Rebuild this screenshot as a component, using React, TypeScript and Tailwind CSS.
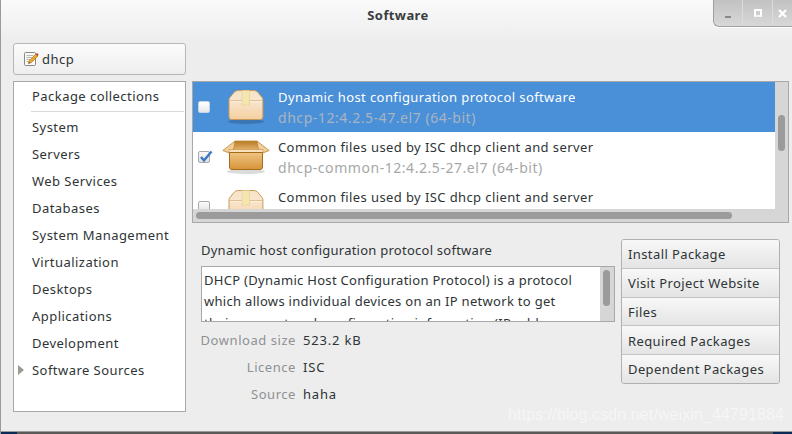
import React from 'react';

const font = { fontFamily: '"Noto Sans", sans-serif' };

const collections = [
  'System',
  'Servers',
  'Web Services',
  'Databases',
  'System Management',
  'Virtualization',
  'Desktops',
  'Applications',
  'Development',
  'Software Sources',
];

const actions = ['Install Package', 'Visit Project Website', 'Files', 'Required Packages', 'Dependent Packages'];

const ClosedBox = ({ id }: { id: string }) => (
  <svg width="48" height="36" viewBox="0 0 48 36" className="shrink-0">
    <defs>
      <linearGradient id={id} x1="0" y1="0" x2="0" y2="1">
        <stop offset="0" stopColor="#f8e2c6" />
        <stop offset="0.35" stopColor="#f9e6cf" />
        <stop offset="1" stopColor="#f4cf9e" />
      </linearGradient>
    </defs>
    <ellipse cx="24" cy="32.500" rx="18" ry="2.500" fill="#000" opacity="0.18" />
    <path d="M12 3.500C13 2 15 1.500 17 1.500h14c2 0 4 .5 5 2l4 5c.6.8.9 1.500.9 2.500V28a2.500 2.500 0 0 1-2.500 2.500H9.500A2.500 2.500 0 0 1 7 28V11c0-1 .3-1.700.9-2.500z" fill={`url(#${id})`} stroke="#c9995a" />
    <path d="M8 11.500h32" stroke="#dcb584" strokeWidth="0.800" />
    <path d="M8 12.500h32" stroke="#fff3e2" strokeWidth="0.800" />
    <path d="M20 1.500h7.500v15l-2-1-1.700 1-1.800-1-2 1z" fill="#f3e6ae" stroke="#dcc98c" strokeWidth="0.500" />
  </svg>
);

const OpenBox = () => (
  <svg width="48" height="36" viewBox="0 0 48 36" className="shrink-0">
    <defs>
      <linearGradient id="boxBody" x1="0" y1="0" x2="0" y2="1">
        <stop offset="0" stopColor="#efc483" />
        <stop offset="1" stopColor="#d6943a" />
      </linearGradient>
      <linearGradient id="boxInner" x1="0" y1="0" x2="0" y2="1">
        <stop offset="0" stopColor="#b47a22" />
        <stop offset="1" stopColor="#e3b36d" />
      </linearGradient>
    </defs>
    <ellipse cx="24" cy="32.500" rx="19" ry="2.500" fill="#000" opacity="0.14" />
    <path d="M13 2h22l5 9H8z" fill="url(#boxInner)" stroke="#c38c3a" strokeWidth="0.800" />
    <path d="M13 2 .8 11.500l6.500 2.500L12 9zM35 2l12.200 9.500-6.500 2.500L36 9z" fill="#f0cf9b" stroke="#bd8433" strokeWidth="0.800" />
    <path d="M7 10.500h34v3H7z" fill="#f7e0bb" stroke="#c79345" strokeWidth="0.600" />
    <path d="M7.500 13.500h33V28a2.500 2.500 0 0 1-2.500 2.500H10A2.500 2.500 0 0 1 7.500 28z" fill="url(#boxBody)" stroke="#a66d18" />
  </svg>
);

const NoteIcon = () => (
  <svg width="16" height="16" viewBox="0 0 16 16" className="shrink-0">
    <rect x="1.500" y="1.500" width="11" height="13" rx="1" fill="#f8f8f4" stroke="#8a8a84" />
    <path d="M3.500 4.500h7M3.500 6.500h6M3.500 8.500h4M3.500 10.500h3" stroke="#a8a8a4" strokeWidth="0.800" />
    <path d="m5.500 12.500 1-3 6.500-6.500 2 2-6.500 6.500z" fill="#eda82c" stroke="#a8680e" strokeWidth="0.600" />
    <path d="m13 3 1-1 1.500 1.500-1 1.500z" fill="#c8281e" />
    <path d="m5.500 12.500.4-1.500 1.100 1.100z" fill="#333" />
  </svg>
);

const Check = ({ checked = false, white = false }: { checked?: boolean; white?: boolean }) => (
  <div className={`relative w-[12px] h-[12px] shrink-0 rounded-[2px] border ${white ? 'bg-gradient-to-b from-white to-[#e4e8ea] border-[#c4d4e6]' : 'bg-gradient-to-b from-[#fafafa] to-[#e2e2e2] border-[#a8a8a8]'}`}>
    {checked && (
      <svg width="14" height="13" viewBox="0 0 14 13" className="absolute left-[0px] top-[-2px]">
        <path d="M2 7 5 10.500 12.500 1.500" fill="none" stroke="#3b78c4" strokeWidth="2.400" />
      </svg>
    )}
  </div>
);

const PackageRow = ({
  id,
  title,
  sub,
  selected = false,
  checked = false,
  open = false,
}: {
  id: string;
  title: string;
  sub: string;
  selected?: boolean;
  checked?: boolean;
  open?: boolean;
}) => (
  <div className={`h-[50px] shrink-0 flex items-center pl-[5px] ${selected ? 'bg-[#4a90d9]' : 'bg-white'}`}>
    <div className="w-[12px] flex items-center">
      <Check checked={checked} white={selected} />
    </div>
    <div className="w-[68px] flex justify-center pl-[3px]">{open ? <OpenBox /> : <ClosedBox id={id} />}</div>
    <div className="flex flex-col gap-[3px] pt-[1px]">
      <div className={`text-[13px] leading-[18px] tracking-[0.4px] whitespace-nowrap ${selected ? 'text-white' : 'text-[#2e3436]'}`}>{title}</div>
      <div className={`text-[14px] leading-[18px] tracking-[0.55px] whitespace-nowrap ${selected ? 'text-[#a9b4bf]' : 'text-[#a6a8a8]'}`}>{sub}</div>
    </div>
  </div>
);

const Field = ({ label, value }: { label: string; value: string }) => (
  <div className="h-[27px] flex items-center">
    <div className="w-[104px] text-right text-[13px] tracking-[0.55px] text-[#8f9192]">{label}</div>
    <div className="pl-[7px] text-[13px] tracking-[0.8px] text-[#2e3436]">{value}</div>
  </div>
);

export default function App() {
  return (
    <div style={font} className="relative w-[792px] h-[434px] overflow-hidden flex flex-col bg-[#ededed] border-l border-l-[#9a9a9a]">
      {/* title bar */}
      <div className="h-[43px] shrink-0 bg-gradient-to-b from-[#fafafa] to-[#ededed] pt-[5px] pl-[3px] text-center text-[13px] leading-[20px] font-bold tracking-[0.4px] text-[#3a3d3f]">
        Software
      </div>
      <div className="absolute right-0 top-0 w-[79px] h-[27px] flex rounded-bl-[6px] bg-gradient-to-b from-[#c2c2c2] to-[#d8d8d8] border-l border-b border-[#a0a0a0] shadow-[0_1px_0_#fff]">
        <div className="w-[29px] flex items-end justify-center pb-[8px] border-r border-[#dcdcdc]">
          <div className="w-[6px] h-[2px] bg-[#888]" />
        </div>
        <div className="w-[30px] flex items-center justify-center border-r border-[#dcdcdc]">
          <div className="w-[8px] h-[8px] border-2 border-white border-b-[#f4f4f4]" />
        </div>
        <div className="flex-1 flex items-center justify-center">
          <svg width="9" height="9" viewBox="0 0 9 9">
            <path d="M1 1l7 7M8 1 1 8" stroke="#fff" strokeWidth="2.200" />
          </svg>
        </div>
      </div>

      <div className="flex-1 flex pl-[12px] pb-[19px]">
        {/* left column */}
        <div className="w-[173px] shrink-0 flex flex-col gap-[6px]">
          <div className="h-[32px] shrink-0 flex items-center gap-[3px] pl-[9px] rounded-[3px] border border-[#b6b6b3] bg-gradient-to-b from-[#fbfbfb] to-[#eeeeee] text-[13px] text-[#2e3436]">
            <NoteIcon />
            <span className="tracking-[0.5px] pt-[1px]">dhcp</span>
          </div>
          <div className="flex-1 bg-white border border-[#a8a8a8] pl-[17px] pr-px">
            <div className="h-[30px] flex items-center pl-px border-b border-[#d9d9d9] text-[13px] tracking-[0.45px] text-[#2e3436]">
              Package collections
            </div>
            <div className="pt-[2px]">
              {collections.map((name) => (
                <div key={name} className="relative h-[27px] flex items-center pl-px text-[13px] tracking-[0.45px] text-[#2e3436]">
                  {name === 'Software Sources' && (
                    <div className="absolute left-[-13px] top-[8px] w-0 h-0 border-y-[5px] border-y-transparent border-l-[6px] border-l-[#9a9a92]" />
                  )}
                  {name}
                </div>
              ))}
            </div>
          </div>
        </div>

        {/* right column */}
        <div className="w-[597px] ml-[6px] shrink-0 flex flex-col">
          <div className="mt-[38px] h-[142px] shrink-0 border border-[#a8a8a8] flex flex-col bg-[#d6d6d6]">
            <div className="h-[127px] flex overflow-hidden">
              <div className="w-[582px] shrink-0 flex flex-col overflow-hidden bg-white">
                <PackageRow id="boxA" selected title="Dynamic host configuration protocol software" sub="dhcp-12:4.2.5-47.el7 (64-bit)" />
                <PackageRow id="boxB" checked open title="Common files used by ISC dhcp client and server" sub="dhcp-common-12:4.2.5-27.el7 (64-bit)" />
                <PackageRow id="boxC" title="Common files used by ISC dhcp client and server" sub="dhcp-common-12:4.2.5-47.el7 (64-bit)" />
              </div>
              <div className="flex-1 pl-[3px] pt-[33px]">
                <div className="w-[7px] h-[36px] rounded-full bg-[#9b9b9b]" />
              </div>
            </div>
            <div className="pl-[3px] pt-[3px]">
              <div className="w-[536px] h-[7px] rounded-full bg-[#9b9b9b]" />
            </div>
          </div>

          <div className="flex-1 flex">
            <div className="w-[429px] shrink-0">
              <div className="pl-[9px] pt-[17px] h-[43px] text-[13px] leading-[20px] tracking-[0.25px] text-[#2e3436]">
                Dynamic host configuration protocol software
              </div>
              <div className="ml-[9px] w-[414px] h-[56px] border border-[#a8a8a8] bg-[#d6d6d6] flex overflow-hidden">
                <div className="w-[398px] shrink-0 bg-white px-[2px] pt-[3px] text-[13px] leading-[21px] tracking-[0.3px] text-[#2e3436] whitespace-nowrap">
                  <div>DHCP (Dynamic Host Configuration Protocol) is a protocol</div>
                  <div>which allows individual devices on an IP network to get</div>
                  <div className="pt-[1px]">their own network configuration information (IP address,</div>
                </div>
                <div className="pl-[3px] pt-[3px]">
                  <div className="w-[7px] h-[36px] rounded-full bg-[#9b9b9b]" />
                </div>
              </div>
              <div className="pt-[5px]">
                <Field label="Download size" value="523.2 kB" />
                <Field label="Licence" value="ISC" />
                <Field label="Source" value="haha" />
              </div>
            </div>
            <div className="mt-[16px] w-[159px] h-[145px] rounded-[3px] border border-[#b0b0b0] flex flex-col overflow-hidden">
              {actions.map((label) => (
                <div key={label} className="flex-1 flex items-center pl-[6px] pt-[2px] border-t first:border-t-0 border-[#c4c4c4] bg-gradient-to-b from-[#f8f8f8] to-[#e4e4e4] text-[13px] tracking-[0.4px] text-[#2e3436] whitespace-nowrap">
                  {label}
                </div>
              ))}
            </div>
          </div>
        </div>
      </div>

      {/* bottom edge of the desktop behind the window */}
      <div className="h-[3px] shrink-0 -ml-px flex bg-[#5a5a58] border-t border-[#9a9a9a]">
        <div className="w-[17px] bg-[#0b2a55]" />
        <div className="flex-1" />
        <div className="w-[19px] bg-[#0b2a55]" />
      </div>

      {/* csdn watermark */}
      <div className="absolute right-[8px] top-[406px] text-[16px] leading-[18px] tracking-[0.1px] text-white/50 [font-family:'Liberation_Sans',sans-serif]">
        https://blog.csdn.net/weixin_44791884
      </div>
    </div>
  );
}
